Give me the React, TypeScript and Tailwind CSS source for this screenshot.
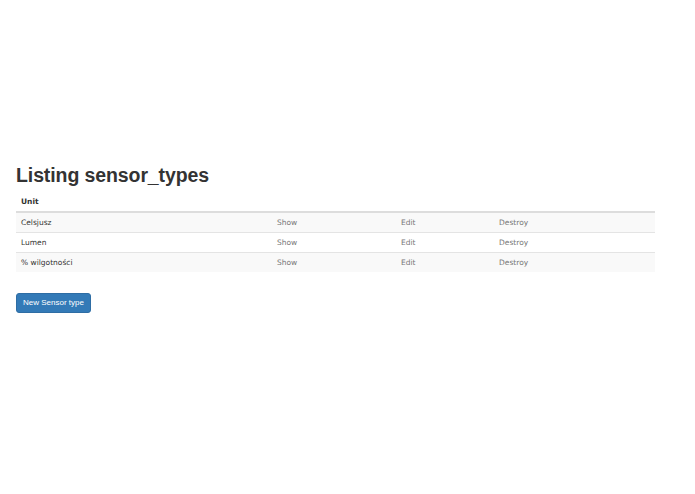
import React from 'react';

const ROWS = ['Celsjusz', 'Lumen', '% wilgotności'];

const App: React.FC = () => {
  return (
    <div className="min-h-[494px] bg-white px-4 pt-[164px] font-['Liberation_Sans',Arial,sans-serif] text-[#333]">
      <h1 className="text-[19.5px] leading-[22px] font-bold mb-[6px] tracking-[-0.1px]">Listing sensor_types</h1>

      <table className="w-[639px] table-fixed border-collapse font-['DejaVu_Sans',Verdana,sans-serif] text-[7.5px]">
        <colgroup>
          <col className="w-[256px]" />
          <col className="w-[124px]" />
          <col className="w-[98px]" />
          <col />
        </colgroup>
        <thead>
          <tr className="border-b-2 border-[#ddd]">
            <th className="text-left font-bold px-[5px] h-[20px] text-[#333]">Unit</th>
            <th />
            <th />
            <th />
          </tr>
        </thead>
        <tbody>
          {ROWS.map((unit, i) => (
            <tr key={unit} className={`border-t border-[#e4e4e4] first:border-t-0 ${i % 2 === 0 ? 'bg-[#f9f9f9]' : 'bg-white'}`}>
              <td className="px-[5px] pt-[1px] h-[20px] text-[#333]">{unit}</td>
              <td className="px-[5px] pt-[1px] text-[#777]">Show</td>
              <td className="px-[5px] pt-[1px] text-[#777]">Edit</td>
              <td className="px-[5px] pt-[1px] text-[#777]">Destroy</td>
            </tr>
          ))}
        </tbody>
      </table>

      <button className="mt-[21px] h-[20px] px-[6px] rounded-[3px] bg-[#337ab7] border border-[#2e6da4] text-white text-[8px] font-['Liberation_Sans',Arial,sans-serif]">
        New Sensor type
      </button>
    </div>
  );
};

export default App;
